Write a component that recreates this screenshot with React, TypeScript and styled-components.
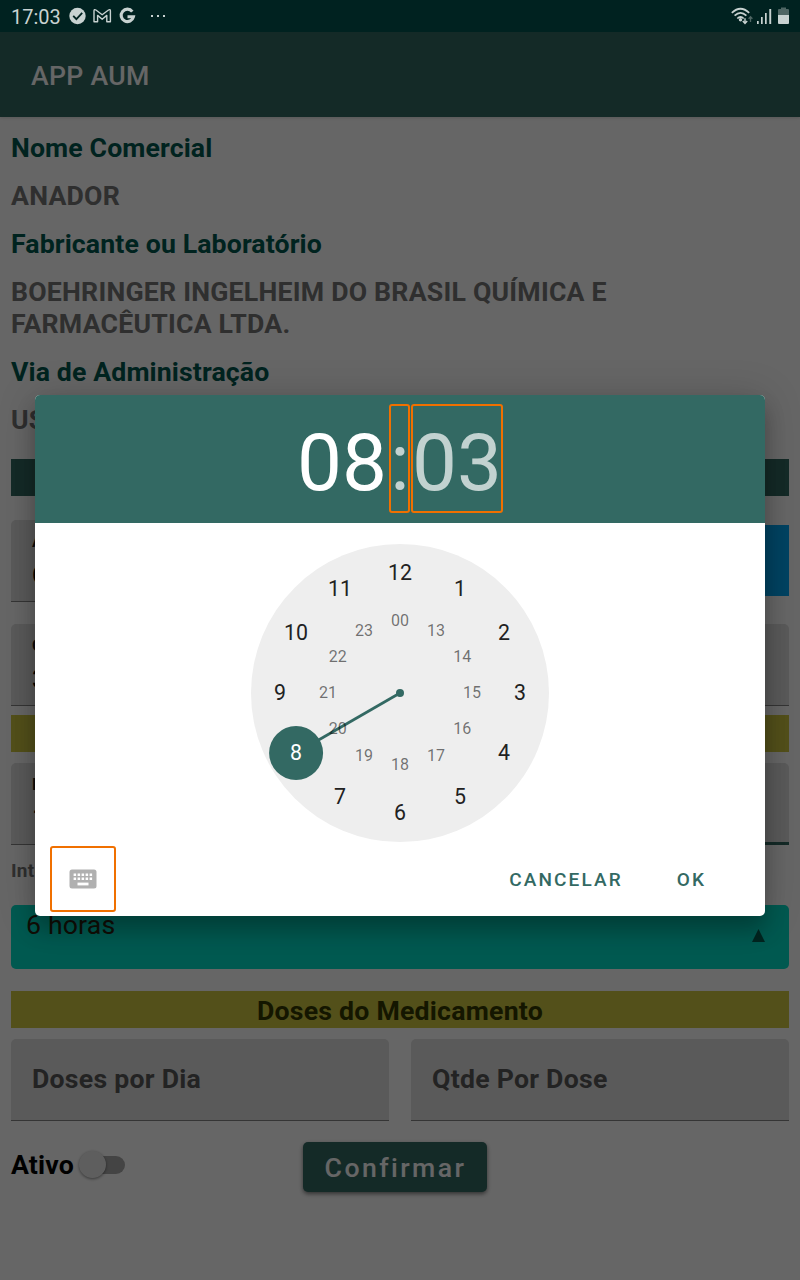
import React from "react";
import styled, { createGlobalStyle } from "styled-components";

const Global = createGlobalStyle`
  * { box-sizing: border-box; }
  body { margin: 0; background: #666; font-family: Roboto, "Liberation Sans", sans-serif; }
`;

const Screen = styled.div`
  position: relative;
  width: 800px;
  height: 1280px;
  overflow: hidden;
  background: #fff;
`;

const StatusBar = styled.header`
  position: relative;
  z-index: 2;
  height: 32px;
  padding: 0 10px 0 11px;
  display: flex;
  align-items: center;
  justify-content: space-between;
  background: #002220;
  color: #c8d2d1;
  font-size: 20px;
`;

const StatusGroup = styled.div`
  display: flex;
  align-items: center;
  svg { display: block; }
`;

const Clock = styled.span`
  width: 58px;
  padding-top: 2px;
  line-height: 30px;
`;

const AppBar = styled.div`
  height: 85px;
  padding: 2px 31px 0;
  display: flex;
  align-items: center;
  background: #336963;
  box-shadow: 0 1px 3px rgba(0, 0, 0, 0.15);
  color: #fff;
  font-size: 26.67px;
  font-weight: 500;
  letter-spacing: 0.3px;
`;

const Content = styled.main`
  padding: 15px 11px 0;
  display: flex;
  flex-direction: column;
`;

const Info = styled.p<{ $title?: boolean }>`
  margin: 0 0 16px;
  font-size: 26.67px;
  line-height: 32px;
  font-weight: 700;
  letter-spacing: ${(p) => (p.$title ? 0.12 : 0.22)}px;
  color: ${(p) => (p.$title ? "#00574f" : "#757575")};
`;

const Band = styled.div<{ $tone: "teal" | "olive"; $gap: number }>`
  height: 37px;
  margin-top: ${(p) => p.$gap}px;
  padding-top: 2px;
  text-align: center;
  font-size: 26.67px;
  line-height: 36px;
  font-weight: 700;
  letter-spacing: 0.22px;
  color: #343800;
  background: ${(p) => (p.$tone === "teal" ? "#336963" : "#d0c843")};
`;

const FieldRow = styled.div<{ $gap: number }>`
  display: flex;
  gap: 22px;
  margin-top: ${(p) => p.$gap}px;
`;

const Field = styled.div<{ $active?: boolean }>`
  flex: 1;
  height: 82px;
  padding: 0 21px 2px;
  display: flex;
  flex-direction: column;
  justify-content: center;
  border-radius: 5px 5px 0 0;
  border-bottom: ${(p) => (p.$active ? "3px solid #336963" : "1px solid #858585")};
  background: #e1e1e1;
  color: #595959;
  font-size: 26.67px;
  font-weight: 700;
  letter-spacing: 0.25px;
`;

const FieldLabel = styled.span`
  padding-top: 2px;
  font-size: 16.67px;
  line-height: 28px;
  color: #222;
`;

const FieldValue = styled.span`
  font-size: 26.67px;
  font-weight: 500;
  line-height: 38px;
  color: #000;
`;

const BlueButton = styled.div`
  width: 120px;
  height: 71px;
  margin-top: 5px;
  background: #03a9f4;
`;

const Caption = styled.div`
  height: 60px;
  padding-top: 14px;
  font-size: 19px;
  line-height: 24px;
  font-weight: 700;
  letter-spacing: 0.3px;
  color: #757575;
`;

const Spinner = styled.div`
  height: 64px;
  padding: 4px 24px 0 15px;
  display: flex;
  justify-content: space-between;
  border-radius: 5px;
  background: #00dec8;
  color: #2b2411;
  font-size: 26.67px;
  line-height: 32px;
  letter-spacing: 0.15px;
  svg { margin-top: 20px; }
`;

const Footer = styled.div`
  display: grid;
  grid-template-columns: 292px 184px;
  margin-top: 21px;
`;

const SwitchRow = styled.div`
  display: flex;
  align-items: center;
  height: 46px;
  font-size: 26.67px;
  font-weight: 700;
  letter-spacing: 0.15px;
  color: #000;
`;

const Track = styled.div`
  display: flex;
  align-items: center;
  width: 38px;
  height: 18px;
  margin: -1px 0 0 13px;
  border-radius: 9px;
  background: #aaa;
`;

const Thumb = styled.div`
  flex: none;
  width: 27px;
  height: 27px;
  margin-left: -8px;
  border-radius: 50%;
  background: #ececec;
  box-shadow: 0 1px 3px rgba(0, 0, 0, 0.45);
`;

const Confirm = styled.button`
  height: 50px;
  padding: 2px 0 0 1px;
  border: 0;
  border-radius: 5px;
  background: #336963;
  box-shadow: 0 2px 4px rgba(0, 0, 0, 0.5);
  color: #fff;
  font: 500 26.67px Roboto, sans-serif;
  letter-spacing: 2.42px;
`;

const Scrim = styled.div`
  position: absolute;
  inset: 32px 0 0;
  padding: 363px 35px 0;
  background: rgba(0, 0, 0, 0.6);
`;

const Dialog = styled.section`
  height: 521px;
  display: flex;
  flex-direction: column;
  overflow: hidden;
  border-radius: 5px;
  background: #fff;
  box-shadow: 0 14px 20px rgba(0, 0, 0, 0.22), 0 2px 38px rgba(0, 0, 0, 0.18);
`;

const TimeHeader = styled.div`
  height: 128px;
  padding: 9px 0 0 261px;
  display: flex;
  background: #336963;
`;

const TimePart = styled.div<{ $w: number; $selected?: boolean }>`
  width: ${(p) => p.$w}px;
  height: 109px;
  margin-right: 1px;
  padding-left: ${(p) => (p.$w < 50 ? 1 : 0)}px;
  border: 2px solid ${(p) => (p.$selected ? "transparent" : "#f07000")};
  border-radius: 3px;
  display: flex;
  justify-content: center;
  color: ${(p) => (p.$selected ? "#fff" : "#c2d2d0")};
  font-size: 80px;
  line-height: 114px;
`;

const Dial = styled.svg`
  display: block;
  margin: 21px auto 0;
  flex: none;
  font-family: Roboto, sans-serif;
  text-anchor: middle;
`;

const Actions = styled.div`
  display: flex;
  align-items: center;
  margin-top: 4px;
  padding: 0 59px 0 15px;
`;

const KeyboardButton = styled.div`
  width: 66px;
  height: 66px;
  margin-right: auto;
  display: flex;
  align-items: center;
  justify-content: center;
  border: 2px solid #f07000;
  border-radius: 3px;
`;

const Action = styled.span`
  margin-left: 54px;
  color: #336963;
  font-size: 19px;
  font-weight: 500;
  letter-spacing: 2.1px;
`;

const outer = [12, 1, 2, 3, 4, 5, 6, 7, 8, 9, 10, 11];
const inner = ["00", "13", "14", "15", "16", "17", "18", "19", "20", "21", "22", "23"];

const at = (i: number, r: number) => {
  const a = (i * Math.PI) / 6;
  return { x: 149 + r * Math.sin(a), y: 149 - r * Math.cos(a) };
};

function TimeDial() {
  const hand = at(8, 120);
  return (
    <Dial width="298" height="298" viewBox="0 0 298 298">
      <circle cx="149" cy="149" r="149" fill="#eee" />
      <line x1="149" y1="149" x2={hand.x} y2={hand.y} stroke="#336963" strokeWidth="2.7" />
      <circle cx="149" cy="149" r="4" fill="#336963" />
      <circle cx={hand.x} cy={hand.y} r="27" fill="#336963" />
      {outer.map((n, i) => {
        const p = at(i, 120);
        return (
          <text key={n} x={p.x} y={p.y + 7.2} fontSize="21.33" fill={n === 8 ? "#fff" : "#212121"}>
            {n}
          </text>
        );
      })}
      {inner.map((n, i) => {
        const p = at(i, 72);
        return (
          <text key={n} x={p.x} y={p.y + 5.2} fontSize="16" fill="#000" fillOpacity="0.54">
            {n}
          </text>
        );
      })}
    </Dial>
  );
}

export default function App() {
  return (
    <Screen>
      <Global />
      <StatusBar>
        <StatusGroup>
          <Clock>17:03</Clock>
          <svg width="100" height="20" viewBox="0 0 100 20">
            <circle cx="8.5" cy="10" r="8.2" fill="#c8d2d1" />
            <path d="M4.2 9.8l3.2 3.3 5.8-6.2" fill="none" stroke="#002220" strokeWidth="1.8" />
            <path
              d="M25 15.8V4.8q.2-1.8 1.9-.8L33.2 8.8l6.3-4.8q1.7-1 1.9.8v11h-3.6V9.4l-4.6 3.8-4.6-3.8v6.4z"
              fill="none"
              stroke="#c8d2d1"
              strokeWidth="1.4"
              strokeLinejoin="round"
            />
            <path
              d="M63.3 5.6A6.2 6.2 0 1 0 64.4 10.8H58.5"
              fill="none"
              stroke="#c8d2d1"
              strokeWidth="3.1"
            />
            <path d="M82 9h2v2h-2zM88 9h2v2h-2zM94 9h2v2h-2z" fill="#c8d2d1" />
          </svg>
        </StatusGroup>
        <StatusGroup>
          <svg width="60" height="20" viewBox="0 0 60 20">
            <g fill="none" stroke="#c8d2d1" strokeWidth="1.7">
              <path d="M1.8 6.8Q10.5-1.3 19.2 6.8" />
              <path d="M4.6 9.7Q10.5 4 16.4 9.7" />
              <path d="M7.3 12.5Q10.5 9.5 13.7 12.5" />
            </g>
            <circle cx="10.5" cy="13.7" r="1.7" fill="#c8d2d1" />
            <path d="M15 12.2v5M12.8 15l2.2 2.4 2.2-2.4" fill="none" stroke="#c8d2d1" strokeWidth="1.4" />
            <path d="M20.5 16v-5.2M18.6 12.7l1.9-2 1.9 2" fill="none" stroke="#4f6664" strokeWidth="1.3" />
            <path d="M27 15h1.7v3H27zM31 11h1.7v7H31zM35 7h1.7v11H35zM39.3 3h1.9v15h-1.9z" fill="#c8d2d1" />
            <path d="M48 4q0-1 1-1h2V1.5h5V3h2q1 0 1 1v5.5H48z" fill="#4f6664" />
            <path d="M48 9h11v8q0 1-1 1h-9q-1 0-1-1z" fill="#c8d2d1" />
          </svg>
        </StatusGroup>
      </StatusBar>
      <AppBar>APP AUM</AppBar>
      <Content>
        <Info $title>Nome Comercial</Info>
        <Info>ANADOR</Info>
        <Info $title>Fabricante ou Laboratório</Info>
        <Info>
          BOEHRINGER INGELHEIM DO BRASIL QUÍMICA E
          <br />
          FARMACÊUTICA LTDA.
        </Info>
        <Info $title>Via de Administração</Info>
        <Info>USO</Info>
        <Band $tone="teal" $gap={7} />
        <FieldRow $gap={24}>
          <Field>
            <FieldLabel>A</FieldLabel>
            <FieldValue>C</FieldValue>
          </Field>
          <BlueButton />
        </FieldRow>
        <FieldRow $gap={22}>
          <Field>
            <FieldLabel>Q</FieldLabel>
            <FieldValue>3</FieldValue>
          </Field>
        </FieldRow>
        <Band $tone="olive" $gap={9} />
        <FieldRow $gap={11}>
          <Field>
            <FieldLabel>D</FieldLabel>
            <FieldValue>1</FieldValue>
          </Field>
          <Field $active />
        </FieldRow>
        <Caption>Inter</Caption>
        <Spinner>
          6 horas
          <svg width="13" height="13" viewBox="0 0 13 13">
            <path d="M6.5 0L13 13H0z" fill="#005c52" />
          </svg>
        </Spinner>
        <Band $tone="olive" $gap={22}>
          Doses do Medicamento
        </Band>
        <FieldRow $gap={11}>
          <Field>Doses por Dia</Field>
          <Field>Qtde Por Dose</Field>
        </FieldRow>
        <Footer>
          <SwitchRow>
            Ativo
            <Track>
              <Thumb />
            </Track>
          </SwitchRow>
          <Confirm>Confirmar</Confirm>
        </Footer>
      </Content>
      <Scrim>
        <Dialog>
          <TimeHeader>
            <TimePart $w={92} $selected>
              08
            </TimePart>
            <TimePart $w={21}>:</TimePart>
            <TimePart $w={92}>03</TimePart>
          </TimeHeader>
          <TimeDial />
          <Actions>
            <KeyboardButton>
              <svg width="28" height="20" viewBox="0 0 28 20">
                <rect x="0.5" y="0.5" width="27" height="19" rx="2.5" fill="#b0b0b0" />
                <g fill="#fff">
                  {[0, 1, 2, 3, 4].map((i) => (
                    <React.Fragment key={i}>
                      <rect x={4.6 + i * 4} y="4.5" width="2.5" height="2.5" />
                      <rect x={4.6 + i * 4} y="8.5" width="2.5" height="2.5" />
                    </React.Fragment>
                  ))}
                  <rect x="8.5" y="13.6" width="11" height="2.8" />
                </g>
              </svg>
            </KeyboardButton>
            <Action>CANCELAR</Action>
            <Action>OK</Action>
          </Actions>
        </Dialog>
      </Scrim>
    </Screen>
  );
}
